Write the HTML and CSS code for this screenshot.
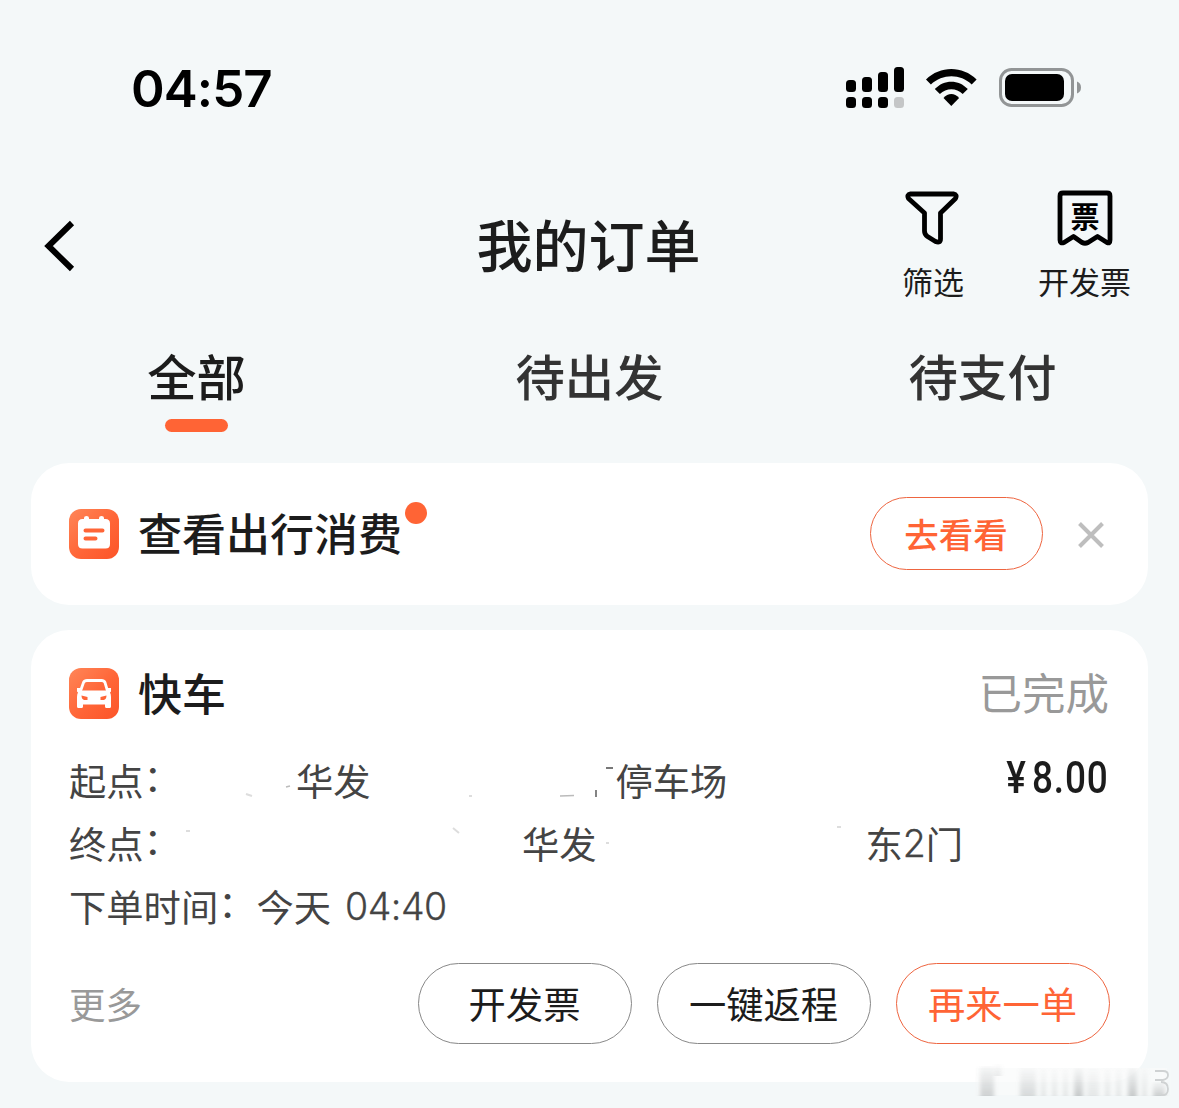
FILE: index.html
```html
<!DOCTYPE html>
<html lang="zh-CN">
<head>
<meta charset="utf-8">
<title>我的订单</title>
<link rel="stylesheet" href="styles.css">
</head>
<body>
<div class="screen">
  <header class="status">
    <div class="clock">04:57</div>
    <svg class="status-icons" width="240" height="44" viewBox="0 0 240 44">
      <g>
        <rect x="1" y="15" width="10" height="12" rx="3.500"/>
        <rect x="17" y="12" width="10" height="15" rx="3.500"/>
        <rect x="33" y="7" width="10" height="20" rx="3.500"/>
        <rect x="49" y="2" width="10" height="25" rx="3.500"/>
        <rect x="1" y="32" width="10" height="11" rx="3.500"/>
        <rect x="17" y="32" width="10" height="11" rx="3.500"/>
        <rect x="33" y="32" width="10" height="11" rx="3.500"/>
        <rect x="49" y="32" width="10" height="11" rx="3.500" fill="#c4c6c7"/>
      </g>
      <path d="M81 14.500C95 .5 117.600 .5 131.600 14.500L126.700 19.500C115.500 8.500 97.500 8.500 85.900 19.500Z"/>
      <path d="M89.800 24C99 14.200 113.600 14.200 122.800 24L117.700 29C111.500 22.500 101.200 22.500 94.900 29Z"/>
      <path d="M98.500 33C103 27.500 109.600 27.500 114.100 33L106.300 41Z"/>
      <rect x="155.500" y="4.500" width="72" height="36" rx="11" fill="none" stroke="#929596" stroke-width="3"/>
      <rect x="160" y="9" width="59" height="27" rx="7"/>
      <path d="M232 16.500Q236 18 236 22.500Q236 27 232 28.500Z" fill="#929596"/>
    </svg>
  </header>

  <nav class="titlebar">
    <svg class="back" width="34" height="56" viewBox="0 0 34 56"><path d="M31 5L7.500 28L31 51" fill="none" stroke="#000" stroke-width="6"/></svg>
    <h1>我的订单</h1>
    <div class="tools">
      <div class="tool">
        <svg width="56" height="58" viewBox="0 0 56 58"><path d="M5.500 5H48.500Q52.500 5.500 50.500 9.500L35.500 24V50Q35.500 54.500 30.500 52.500L22.500 47.500Q19.500 45.500 19.500 42V24L3.500 9.500Q1.500 5.500 5.500 5Z" fill="none" stroke="#000" stroke-width="4.800" stroke-linejoin="round"/></svg>
        <span>筛选</span>
      </div>
      <div class="tool">
        <svg width="56" height="58" viewBox="0 0 56 58"><path d="M6 4H50Q53 4 53 7V51Q53 55 50 53.500L40.500 47.500L31 53.500Q28 55 25 53.500L16.500 47.500L7 53.500Q3 55 3 51V7Q3 4 6 4Z" fill="none" stroke="#000" stroke-width="4.800" stroke-linejoin="round"/><text x="28" y="38.500" class="ticket">票</text></svg>
        <span>开发票</span>
      </div>
    </div>
  </nav>

  <div class="tabs">
    <div class="tab active">全部</div>
    <div class="tab">待出发</div>
    <div class="tab">待支付</div>
  </div>

  <section class="card spend">
    <svg class="badge" width="50" height="50" viewBox="0 0 50 50">
      <defs><linearGradient id="warm" x1="0" y1="0" x2="1" y2="1"><stop offset="0" stop-color="#ff8658"/><stop offset=".55" stop-color="#ff6537"/><stop offset="1" stop-color="#fc5428"/></linearGradient></defs>
      <rect width="50" height="50" rx="12" fill="url(#warm)"/>
      <path d="M13.500 10H15V9Q15 7 17.500 7Q20 7 20 9V10H30V9Q30 7 32.500 7Q35 7 35 9V10H36.500Q41 10 41 14.500V35Q41 39.500 36.500 39.500H13.500Q9 39.500 9 35V14.500Q9 10 13.500 10Z" fill="#fff"/>
      <path d="M16.500 21.500H33.500M16.500 29.500H26.500" stroke="#ff6537" stroke-width="4" stroke-linecap="round"/>
    </svg>
    <h2>查看出行消费<i class="dot"></i></h2>
    <button class="pill look">去看看</button>
    <svg class="close" width="26" height="26" viewBox="0 0 26 26"><path d="M1.500 1.500L24.500 24.500M24.500 1.500L1.500 24.500" stroke="#bebebe" stroke-width="4"/></svg>
  </section>

  <section class="card order">
    <div class="order-head">
      <svg class="badge" width="50" height="51" viewBox="0 0 50 51">
        <rect width="50" height="51" rx="12" fill="url(#warm)"/>
        <path d="M11.500 23L14.500 14.500Q15.500 12.500 18 12.500H32.500Q35 12.500 36 14.500L38.500 23" fill="none" stroke="#fff" stroke-width="2.800"/>
        <path d="M8 20H12L13 22.500H37L38 20H42V23.500L41 24.500Q42 26 42 29V38.500Q42 40 40.500 40H37.500Q36 40 36 38.500V36.500H14V38.500Q14 40 12.500 40H9.500Q8 40 8 38.500V29Q8 26 9 24.500L8 23.500Z" fill="#fff"/>
        <path d="M12.500 27.500L18.500 29V32H15Q12.500 31 12.500 27.500ZM37.500 27.500L31.500 29V32H35Q37.500 31 37.500 27.500Z" fill="#ff6537"/>
      </svg>
      <h2>快车</h2>
      <span class="state">已完成</span>
    </div>
    <div class="line"><span>起点</span><i class="colon">：</i><span class="from-area">华发</span><span class="from-lot">停车场</span><b class="price">¥<em>8.00</em></b></div>
    <div class="line"><span>终点</span><i class="colon">：</i><span class="to-area">华发</span><span class="to-gate">东</span><em class="num">2</em><span>门</span></div>
    <div class="line"><span>下单时间</span><i class="colon">：</i><span class="day">今天</span><em class="num time">04:40</em></div>
    <svg class="traces" width="700" height="110" viewBox="0 0 700 110">
      <path d="M423 8H430M413 30V37" stroke="#777" stroke-width="1.800"/>
      <path d="M377 36L391 35.500M103 27L107 26" stroke="#bbb" stroke-width="1.500"/>
      <path d="M63 34L69 36M270 68L276 73M3 71H7M286 36H289M654 67H658M423 83H426" stroke="#ddd" stroke-width="2"/>
    </svg>
    <div class="actions">
      <span class="more">更多</span>
      <button class="pill">开发票</button>
      <button class="pill">一键返程</button>
      <button class="pill hot">再来一单</button>
    </div>
  </section>

  <svg class="smudge" width="204" height="42" viewBox="0 0 204 42">
    <defs>
      <linearGradient id="fade" x1="0" y1="0" x2="0" y2="1"><stop offset="0" stop-color="#8b8f91" stop-opacity=".05"/><stop offset="1" stop-color="#8b8f91" stop-opacity=".5"/></linearGradient>
      <filter id="soft" x="-10%" y="-20%" width="120%" height="140%"><feGaussianBlur stdDeviation="2 .6"/></filter>
    </defs>
    <rect x="2" y="6" width="190" height="27" fill="#fafbfb" opacity=".75" filter="url(#soft)"/>
    <g filter="url(#soft)" fill="url(#fade)">
      <rect x="5" y="4" width="14" height="30" opacity=".75"/>
      <rect x="20" y="2" width="6" height="12" opacity=".35"/>
      <rect x="45" y="6" width="16" height="28" opacity=".6"/>
      <rect x="66" y="6" width="5" height="28" opacity=".4"/>
      <rect x="77" y="6" width="5" height="28" opacity=".4"/>
      <rect x="88" y="6" width="5" height="28" opacity=".4"/>
      <rect x="99" y="6" width="9" height="28" opacity=".9"/>
      <rect x="112" y="6" width="12" height="28" opacity=".35"/>
      <rect x="130" y="6" width="5" height="28" opacity=".4"/>
      <rect x="141" y="6" width="5" height="28" opacity=".4"/>
      <rect x="153" y="6" width="9" height="28" opacity=".9"/>
      <rect x="167" y="6" width="5" height="28" opacity=".4"/>
      <rect x="178" y="20" width="12" height="14" opacity=".8"/>
    </g>
    <path d="M180 9H188Q193 9 193 13T188 18H180M186 20Q193 20 193 27T186 33" fill="none" stroke="#cfd2d3" stroke-width="1.800"/>
  </svg>
</div>
</body>
</html>
```
FILE: styles.css
```css
* { box-sizing: border-box; margin: 0; }
body {
  background: #f4f8f9;
  color: #1c1c1c;
  font-family: "Noto Sans CJK SC", "Noto Sans", sans-serif;
}
.screen {
  position: relative;
  width: 1179px;
  height: 1108px;
  overflow: hidden;
}
em, i { font-style: normal; }
svg { display: block; flex: none; }

.status {
  display: flex;
  justify-content: space-between;
  align-items: center;
  height: 174px;
  padding: 0 94px 0 131px;
}
.clock {
  font: 600 51px/60px Inter, sans-serif;
  letter-spacing: -.9px;
  padding-top: 3px;
  color: #000;
}
.status-icons { fill: #000; }

.titlebar {
  display: grid;
  grid-template-columns: 1fr auto 1fr;
  align-items: center;
  height: 142px;
  padding: 2px 48px 0 41px;
}
h1 { font-size: 56px; line-height: 80px; font-weight: 500; padding: 0 0 6px 5px; }
.tools { display: flex; justify-content: flex-end; gap: 74px; }
.tool { display: flex; flex-direction: column; align-items: center; }
.tool span { font-size: 31px; line-height: 46px; margin: 11px 0 -1px; }
.ticket { font-size: 29px; font-weight: 700; text-anchor: middle; }

.tabs { display: grid; grid-template-columns: repeat(3, 1fr); height: 147px; padding-top: 23px; }
.tab {
  display: flex;
  flex-direction: column;
  align-items: center;
  font-size: 49.300px;
  line-height: 72px;
  font-weight: 500;
  color: #333;
}
.active { color: #1c1c1c; }
.active::after {
  content: "";
  width: 63px;
  height: 13px;
  margin-top: 8px;
  border-radius: 7px;
  background: #ff6435;
}

.card { margin: 0 31px; border-radius: 38px; background: #fff; padding: 0 38px; }
h2 { font-size: 44px; line-height: 60px; font-weight: 500; margin-left: 19px; padding-bottom: 4px; }
.pill {
  width: 214px;
  height: 81px;
  border: 1px solid #888;
  border-radius: 41px;
  background: #fff;
  padding: 0 1px 2px 0;
  font: 400 37.300px/54px "Noto Sans CJK SC", sans-serif;
  color: #1c1c1c;
}
.spend { display: flex; align-items: center; height: 142px; }
.spend h2 { position: relative; }
.dot {
  position: absolute;
  left: 267px;
  top: 0;
  width: 22px;
  height: 22px;
  border-radius: 50%;
  background: #ff6435;
}
.look {
  width: 173px;
  height: 73px;
  margin: 0 0 1px auto;
  border-color: #ee6540;
  color: #ff6435;
  font-size: 34.500px;
  font-weight: 500;
}
.close { margin: 2px 6px 0 35px; }

.order { position: relative; height: 452px; margin-top: 25px; padding-top: 31px; }
.order-head { display: flex; align-items: center; height: 64px; margin-bottom: 23px; }
.order-head h2 { padding-bottom: 2px; }
.state { margin-left: auto; padding: 0 1px 2px 0; font-size: 43.500px; line-height: 60px; color: #999; }
.line {
  display: flex;
  align-items: center;
  height: 63px;
  font-size: 37.300px;
  line-height: 54px;
  color: #444;
  white-space: pre;
}
.colon { padding-bottom: 8px; }
.num { font: 300 37.500px/54px Inter, sans-serif; padding-top: 3px; -webkit-text-stroke: .3px #444; }
.from-area { margin-left: 115px; }
.from-lot { margin-left: 245px; }
.to-area { margin-left: 341px; }
.to-gate { margin-left: 269px; }
.day { margin-left: 1px; }
.time { margin-left: 14px; letter-spacing: -.5px; }
.price {
  display: flex;
  align-items: center;
  margin-left: auto;
  padding: 0 2px 2px 0;
  font: 500 43.500px/54px Roboto, sans-serif;
  letter-spacing: 1px;
  color: #1c1c1c;
  transform: scaleX(.85);
  transform-origin: right;
}
.price em { margin-left: 6px; }
.traces { position: absolute; left: 152px; top: 130px; fill: none; }
.actions { display: flex; align-items: center; gap: 25px; margin-top: 26px; }
.more { margin-right: auto; font-size: 36.500px; line-height: 54px; color: #999; }
.hot { border-color: #ee6540; color: #ff6435; }
.smudge { position: absolute; left: 975px; top: 1062px; }
```
